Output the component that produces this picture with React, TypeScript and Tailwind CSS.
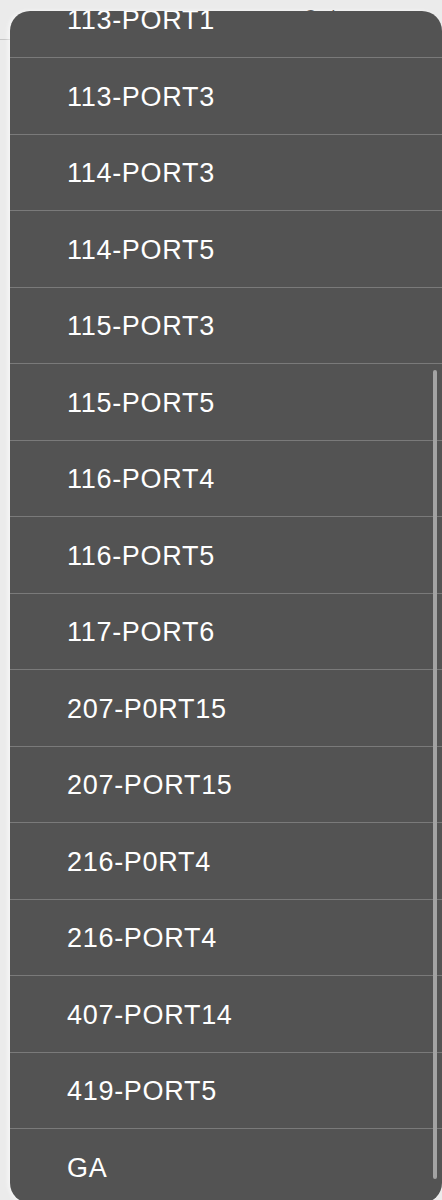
const ports = [
  "113-PORT1",
  "113-PORT3",
  "114-PORT3",
  "114-PORT5",
  "115-PORT3",
  "115-PORT5",
  "116-PORT4",
  "116-PORT5",
  "117-PORT6",
  "207-P0RT15",
  "207-PORT15",
  "216-P0RT4",
  "216-PORT4",
  "407-PORT14",
  "419-PORT5",
  "GA",
];

export default function App() {
  return (
    <div
      className="relative w-[442px] h-[1200px] overflow-hidden bg-[#ebebeb]"
      style={{ fontFamily: '"Liberation Sans", Arial, sans-serif' }}
    >
      {/* page behind the menu */}
      <div className="h-[40px] border-b border-[#c6c6c6] flex items-start pl-[304px] pt-[4px]">
        <span className="text-[17px] text-[#222]">Options</span>
      </div>

      {/* dropdown menu */}
      <div className="absolute left-[10px] top-[11px] w-[432px] h-[1192px] rounded-[20px] bg-[#535353] overflow-hidden shadow-[-2px_0_4px_rgba(255,255,255,0.6)]">
        <ul className="-mt-[29.5px]">
          {ports.map((p, i) => (
            <li
              key={i}
              className="h-[76.5px] flex items-center pl-[57px] pt-[2px] border-b border-[#7a7a7a] last:border-b-0 text-[27px] text-white tracking-[0.7px]"
            >
              {p}
            </li>
          ))}
        </ul>
        <div className="absolute right-[5px] top-[359px] w-[4px] h-[809px] rounded-full bg-[#a3a3a3]" />
      </div>
    </div>
  );
}
